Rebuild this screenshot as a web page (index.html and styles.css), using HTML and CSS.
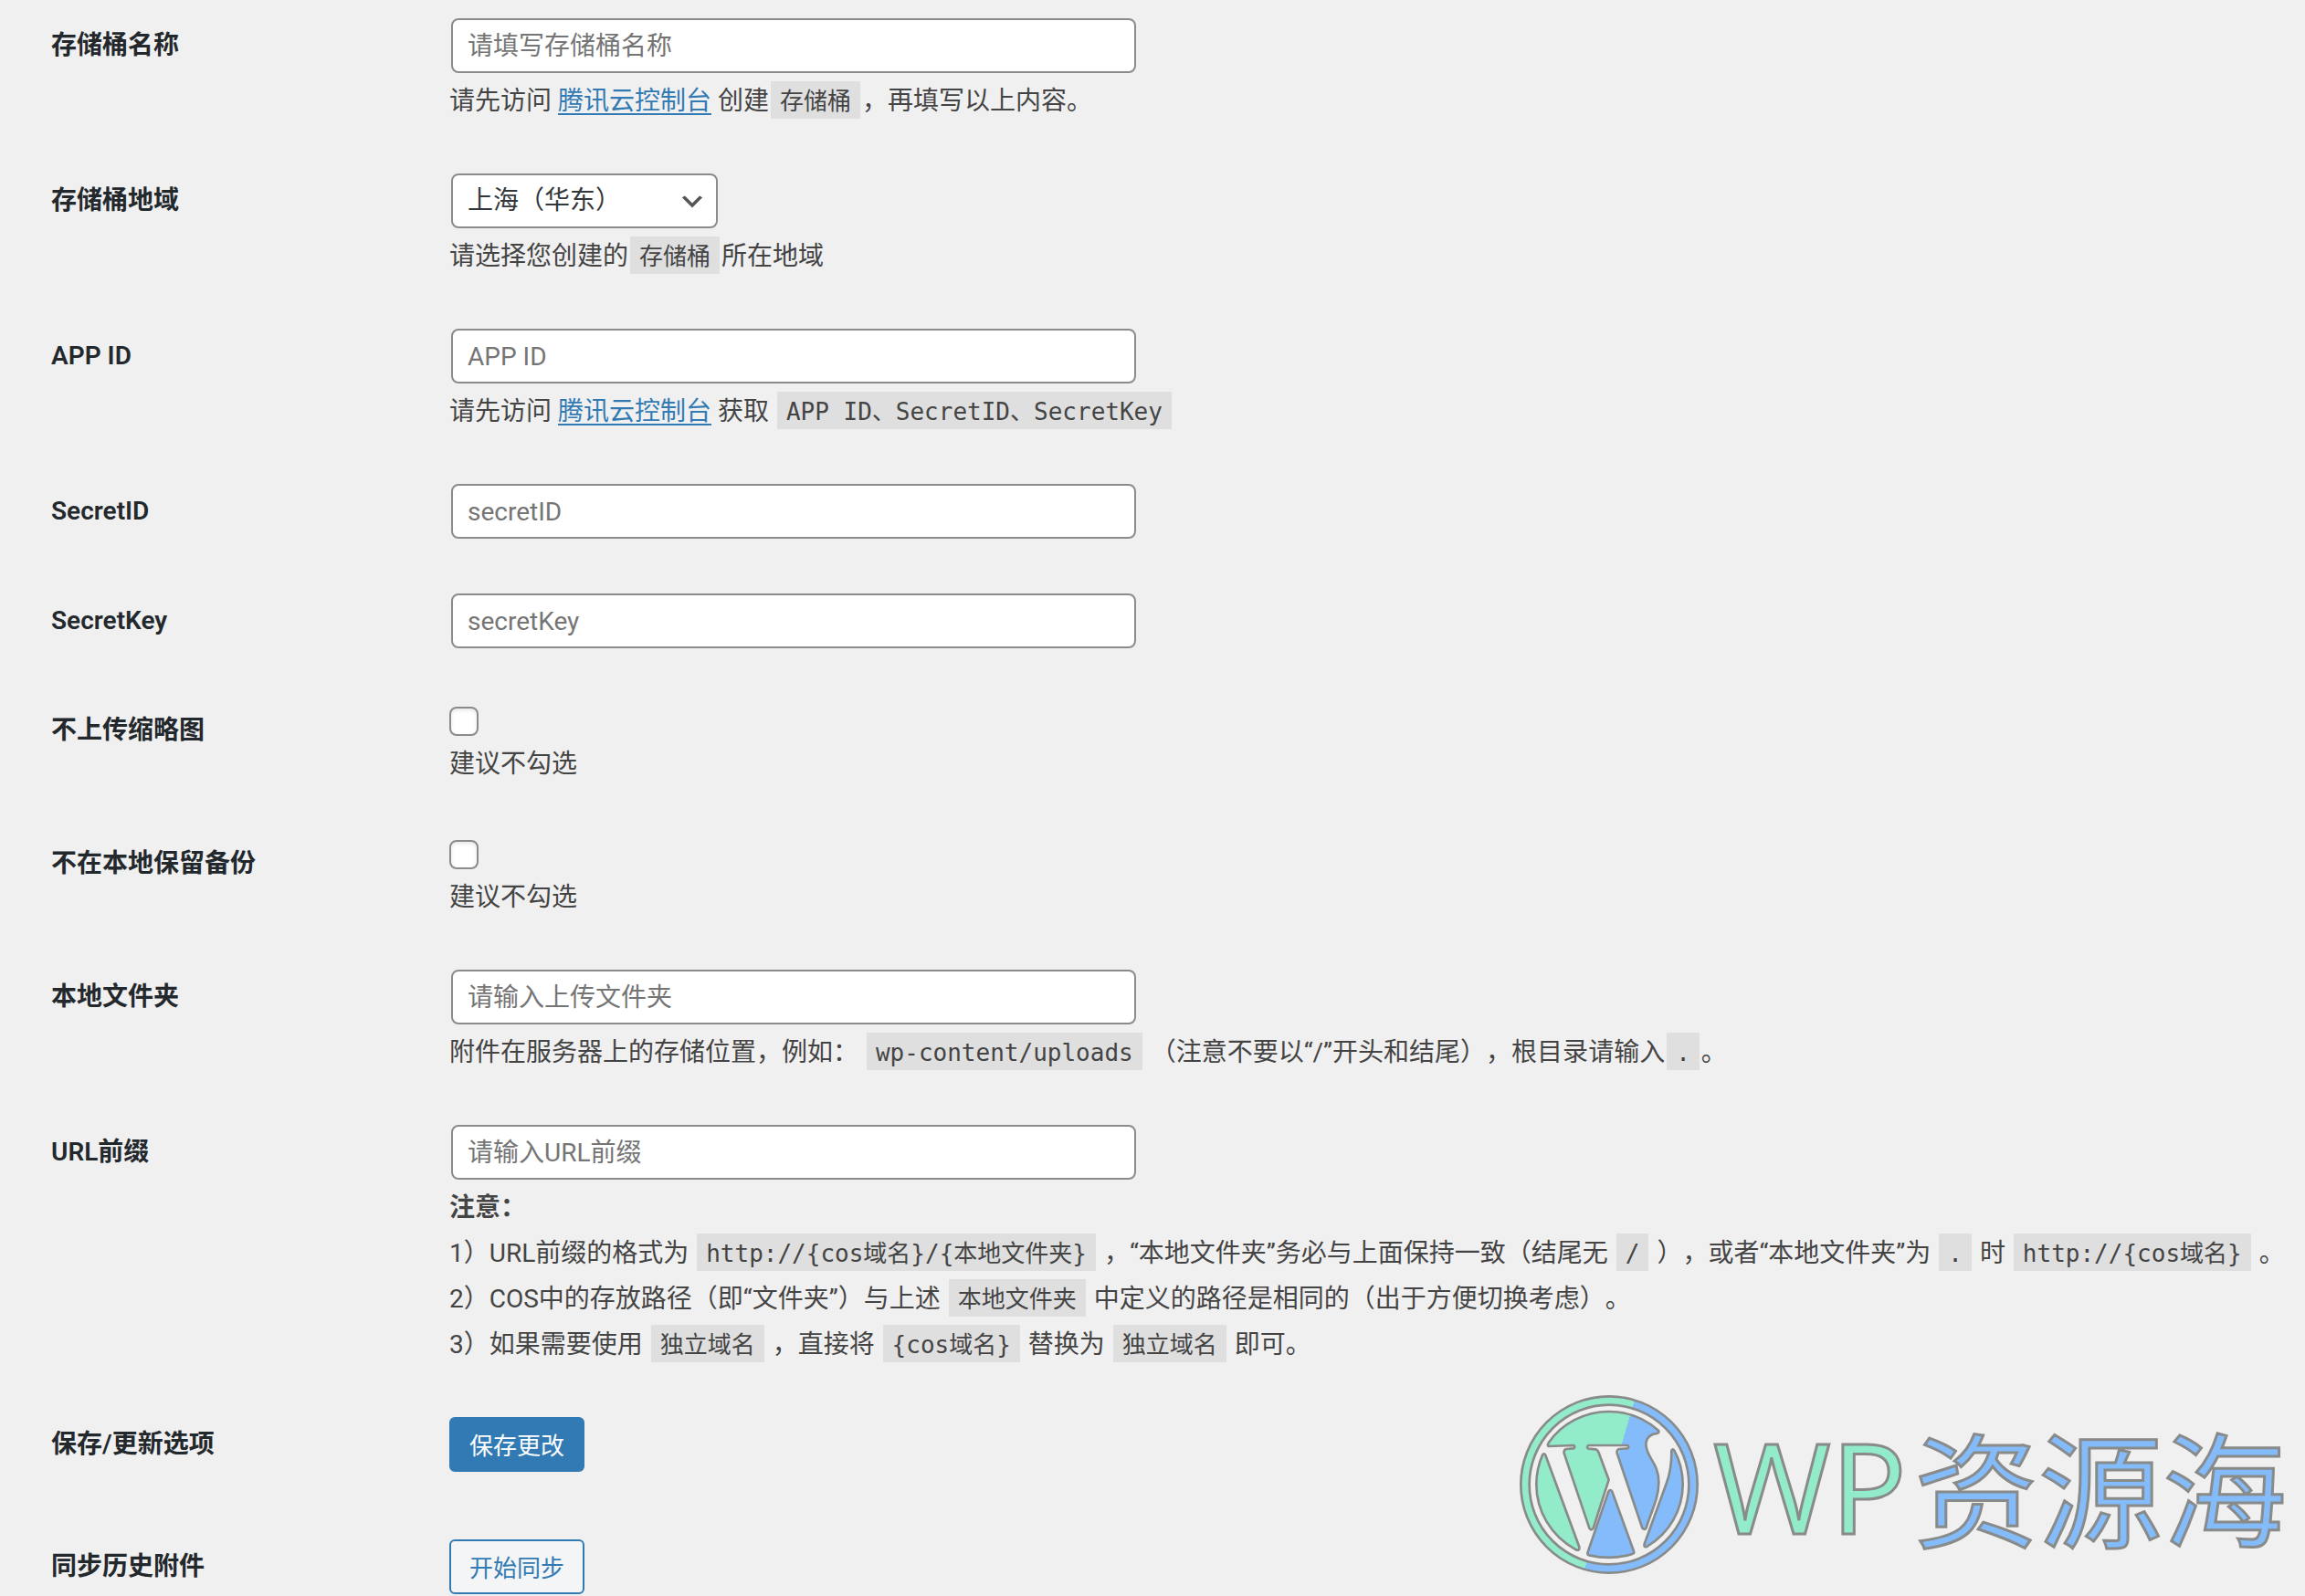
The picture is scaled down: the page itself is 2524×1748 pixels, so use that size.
FILE: index.html
```html
<!DOCTYPE html>
<html lang="zh-CN">
<head>
    <meta charset="UTF-8">
    <meta name="viewport" content="width=device-width, initial-scale=1.0">
    <title>腾讯云 COS 设置</title>
    <link rel="stylesheet" href="styles.css">
</head>
<body>
    <div class="wrap">
        <form class="form-table">
            <div class="row">
                <label class="title" for="bucket">存储桶名称</label>
                <div class="field">
                    <input type="text" id="bucket" class="regular-text" placeholder="请填写存储桶名称">
                    <p class="description">请先访问 <a href="#">腾讯云控制台</a> 创建<code>存储桶</code>，再填写以上内容。</p>
                </div>
            </div>
            <div class="row">
                <label class="title" for="regional">存储桶地域</label>
                <div class="field">
                    <select id="regional" class="select">
                        <option selected>上海（华东）</option>
                    </select>
                    <p class="description">请选择您创建的<code>存储桶</code>所在地域</p>
                </div>
            </div>
            <div class="row">
                <label class="title" for="app_id">APP ID</label>
                <div class="field">
                    <input type="text" id="app_id" class="regular-text" placeholder="APP ID">
                    <p class="description">请先访问 <a href="#">腾讯云控制台</a> 获取 <code>APP ID、SecretID、SecretKey</code></p>
                </div>
            </div>
            <div class="row">
                <label class="title" for="secret_id">SecretID</label>
                <div class="field">
                    <input type="text" id="secret_id" class="regular-text" placeholder="secretID">
                </div>
            </div>
            <div class="row">
                <label class="title" for="secret_key">SecretKey</label>
                <div class="field">
                    <input type="text" id="secret_key" class="regular-text" placeholder="secretKey">
                </div>
            </div>
            <div class="row">
                <label class="title" for="nothumb">不上传缩略图</label>
                <div class="field">
                    <input type="checkbox" id="nothumb" class="checkbox">
                    <p class="description">建议不勾选</p>
                </div>
            </div>
            <div class="row">
                <label class="title" for="nolocalsaving">不在本地保留备份</label>
                <div class="field">
                    <input type="checkbox" id="nolocalsaving" class="checkbox">
                    <p class="description">建议不勾选</p>
                </div>
            </div>
            <div class="row">
                <label class="title" for="upload_path">本地文件夹</label>
                <div class="field">
                    <input type="text" id="upload_path" class="regular-text" placeholder="请输入上传文件夹">
                    <p class="description">附件在服务器上的存储位置，例如： <code>wp-content/uploads</code> （注意不要以“/”开头和结尾），根目录请输入<code>.</code>。</p>
                </div>
            </div>
            <div class="row">
                <label class="title" for="upload_url_path">URL前缀</label>
                <div class="field">
                    <input type="text" id="upload_url_path" class="regular-text" placeholder="请输入URL前缀">
                    <p class="description"><b>注意：</b></p>
                    <p class="description">1）URL前缀的格式为 <code>http://{cos域名}/{本地文件夹}</code> ，“本地文件夹”务必与上面保持一致（结尾无 <code>/</code> ），或者“本地文件夹”为 <code>.</code> 时 <code>http://{cos域名}</code> 。</p>
                    <p class="description">2）COS中的存放路径（即“文件夹”）与上述 <code>本地文件夹</code> 中定义的路径是相同的（出于方便切换考虑）。</p>
                    <p class="description">3）如果需要使用 <code>独立域名</code> ，直接将 <code>{cos域名}</code> 替换为 <code>独立域名</code> 即可。</p>
                </div>
            </div>
            <div class="row submit-row">
                <label class="title" for="submit">保存/更新选项</label>
                <div class="field">
                    <button type="submit" id="submit" class="button button-primary">保存更改</button>
                </div>
            </div>
            <div class="row">
                <label class="title" for="sync">同步历史附件</label>
                <div class="field">
                    <button type="button" id="sync" class="button">开始同步</button>
                </div>
            </div>
        </form>

        <div class="watermark">
            <svg class="watermark-logo" viewBox="42 27 588 588" aria-hidden="true">
                <defs>
                    <linearGradient id="split" gradientUnits="userSpaceOnUse" x1="284" y1="304" x2="392" y2="336">
                        <stop offset="0.5" stop-color="#92ebc9"/>
                        <stop offset="0.5" stop-color="#84bbfb"/>
                    </linearGradient>
                </defs>
                <g fill="url(#split)" stroke="#888b8a" stroke-width="8" stroke-linejoin="round">
                    <path fill-rule="evenodd" d="M336 31a290 290 0 1 0 0 580a290 290 0 1 0 0-580zM336 59a262 262 0 1 1 0 524a262 262 0 1 1 0-524z"/>
                    <path d="M127 224L238 526Q240 540 227 535C145 490 97 408 97 320Q97 270 117 224Q122 216 127 224z"/>
                    <path d="M137 195Q132 192 137 184C180 120 255 81 336 81C397 81 454 104 498 143Q502 150 493 153C472 154 457 168 457 190C458 232 500 250 499 315C498 370 474 408 458 463Q453 472 445 464L362 218Q360 206 370 204L396 202Q404 197 396 192L268 192Q260 198 268 203L292 205Q298 206 301 214L335 305L284 464Q278 474 271 464L188 218Q186 206 196 204L219 202Q227 197 219 192z"/>
                    <path fill="#84bbfb" d="M334 344Q340 334 346 344L417 540Q420 547 412 549C365 564 317 564 270 553Q263 551 266 543z"/>
                    <path d="M541 210Q544 200 550 209C567 240 578 280 578 320C578 404 533 482 461 524Q448 529 452 516L525 315Q542 268 541 210z"/>
                </g>
            </svg>
            <span class="watermark-wp">WP</span>
            <span class="watermark-name">资源海</span>
        </div>
    </div>
</body>
</html>
```
FILE: styles.css
```css
*, *::before, *::after {
    box-sizing: border-box;
}
body {
    margin: 0;

    color           : #444;
    background-color: #f0f0f0;

    font-family      : Roboto, "Noto Sans CJK SC", sans-serif;
    font-size        : 28px;
    line-height      : 38px;
    text-spacing-trim: space-all;
}
.wrap {
    position: relative;
    padding : 20px 20px 2px 56px;
}
.form-table {
    display       : flex;
    flex-direction: column;
    gap           : 60px;
}
.row {
    display: grid;
    grid-template-columns: 436px 1fr;
}
.submit-row {
    padding-bottom: 14px;
}
.title {
    padding-top: 12px;

    color      : #23282d;
    font-weight: 600;
    line-height: 36px;
}
.description {
    margin: 12px 0 0;
}
a {
    color: #327ab3;
    text-underline-offset    : 4px;
    text-decoration-thickness: 2px;
    text-decoration-skip-ink : none;
}
code {
    margin : 0 2px;
    padding: 7px 10px 4px;

    background-color: #dfdfdf;

    font-family: "DejaVu Sans Mono", "Noto Sans CJK SC", monospace;
    font-size  : 26px;
    line-height: 1;
}
.regular-text,
.select {
    display: block;
    height : 60px;
    margin : 0 2px;
    padding: 0 16px;

    color           : #32373c;
    background-color: #fff;
    border          : 2px solid #898b8d;
    border-radius   : 8px;

    font: inherit;
}
.regular-text {
    width    : 750px;
    max-width: 100%;
}
.regular-text::placeholder {
    color: #757575;
}
.select {
    width        : 292px;
    padding-right: 48px;
    appearance   : none;

    background-image   : url("data:image/svg+xml,%3Csvg xmlns='http://www.w3.org/2000/svg' viewBox='0 0 20 20'%3E%3Cpath d='M5 6l5 5 5-5 2 1-7 7-7-7 2-1z' fill='%23555'/%3E%3C/svg%3E");
    background-repeat  : no-repeat;
    background-position: right 10px top 55%;
    background-size    : 32px;
}
.checkbox {
    display: block;
    width  : 32px;
    height : 32px;
    margin : 4px 0 0;

    appearance      : none;
    background-color: #fff;
    border          : 2px solid #898b8d;
    border-radius   : 8px;
    box-shadow      : inset 0 2px 4px rgba(0, 0, 0, 0.1);
}
.button {
    display: block;
    height : 60px;
    padding: 0 20px 2px;

    color           : #327ab3;
    background-color: #f4f5f6;
    border          : 2px solid #327ab3;
    border-radius   : 6px;

    font-family: inherit;
    font-size  : 26px;
    cursor     : pointer;
}
.button-primary {
    color           : #fff;
    background-color: #327ab3;
}

/* site mark over the bottom right corner */
.watermark {
    position: absolute;
    right   : 20px;
    bottom  : 24px;

    display    : flex;
    align-items: center;

    font-size  : 136px;
    line-height: 196px;
    white-space: nowrap;
    pointer-events: none;
    -webkit-text-stroke: 3px #888b8a;
}
.watermark-logo {
    width : 196px;
    height: 196px;
    margin-right: 16px;
}
.watermark-wp {
    margin-right: 8px;

    color      : #92ebc9;
    font-family: "Noto Sans", sans-serif;
    font-size  : 138px;
}
.watermark-name {
    color      : #84bbfb;
    font-family: "Noto Sans CJK SC", sans-serif;
}
```
